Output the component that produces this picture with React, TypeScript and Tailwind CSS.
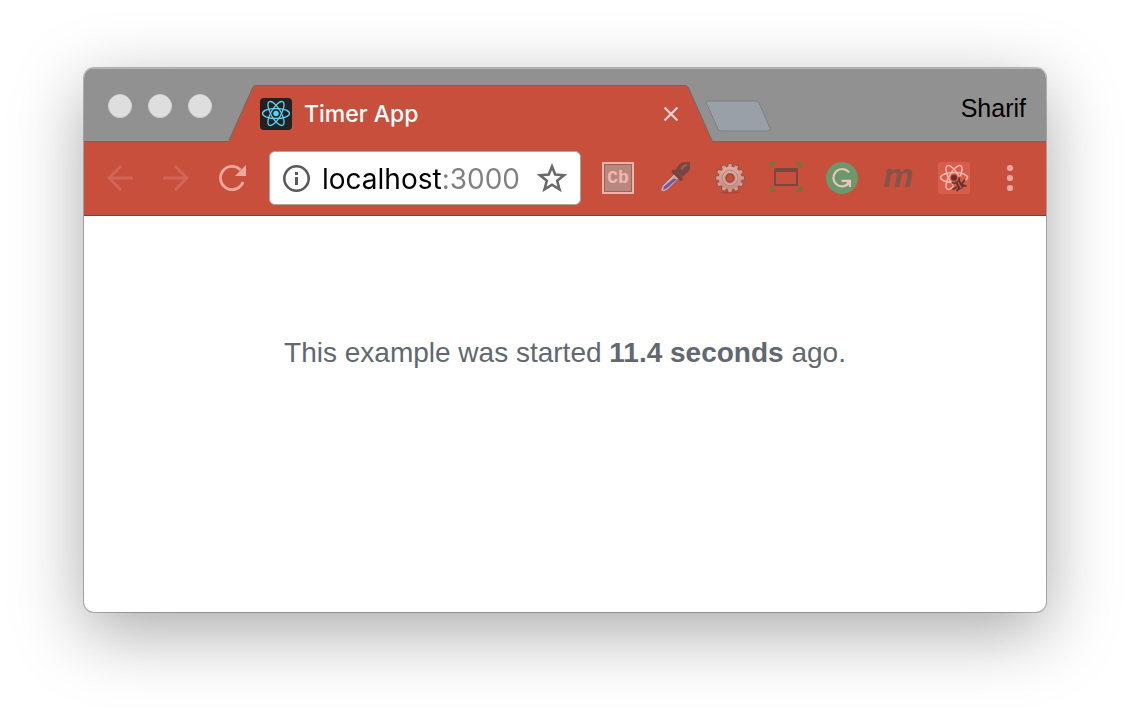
import React, { useState } from 'react';

function ReactAtom({ stroke, width }: { stroke: string; width: number }) {
  return (
    <g fill="none" stroke={stroke} strokeWidth={width}>
      <ellipse cx="16" cy="15.5" rx="13.5" ry="5" />
      <ellipse cx="16" cy="15.5" rx="13.5" ry="5" transform="rotate(60 16 15.5)" />
      <ellipse cx="16" cy="15.5" rx="13.5" ry="5" transform="rotate(120 16 15.5)" />
    </g>
  );
}

function Favicon() {
  return (
    <svg viewBox="0 0 32 32" className="size-8 shrink-0" aria-hidden="true">
      <rect width="32" height="32" rx="4" fill="#222" />
      <ReactAtom stroke="#5ed3f3" width={1.3} />
      <circle cx="16" cy="15.5" r="2.7" fill="#5ed3f3" />
    </svg>
  );
}

function Eyedropper() {
  return (
    <svg viewBox="0 0 32 32" className="size-8" aria-hidden="true">
      <path d="M18 10 L4.500 23.500 L2.500 28 L5 30 L9.500 28 L23 14.500 Z" fill="#d8a5a1" stroke="#9a5a5c" strokeWidth="1" />
      <path d="M15.500 16.500 L19 17 L8.500 26.500 L5 28 L6 24.500 Z" fill="#6a5aa9" />
      <path d="M15.500 9.500 L23 17" stroke="#75443f" strokeWidth="3.6" strokeLinecap="round" />
      <path d="M17 8.500 L20 4 Q23 0 28 0 H31 L32 1 V5 Q33 8 28 12 L24 15 Z" fill="#78463f" />
      <path d="M23.500 7.500 Q25 3.500 29 3" stroke="#9a6159" strokeWidth="2.200" fill="none" />
    </svg>
  );
}

const TEETH = [0, 30, 60, 90, 120, 150, 180, 210, 240, 270, 300, 330];

function Gear() {
  return (
    <svg viewBox="0 0 32 32" className="size-8" aria-hidden="true">
      <defs>
        <linearGradient id="gear-fill" x1="0" y1="0" x2="0" y2="1">
          <stop offset="0" stopColor="#dfaaa0" />
          <stop offset="1" stopColor="#c48c82" />
        </linearGradient>
      </defs>
      <ellipse cx="16" cy="30.500" rx="10" ry="1.200" fill="#b24434" />
      {TEETH.map((a) => (
        <path key={a} d="M13.300 6 L14.200 1.600 H17.800 L18.700 6 Z" fill="#d39e94" stroke="#8b4a40" strokeWidth="0.800" transform={`rotate(${a} 16 16)`} />
      ))}
      <circle cx="16" cy="16" r="11.300" fill="url(#gear-fill)" />
      <circle cx="16" cy="16" r="7.800" fill="none" stroke="#b98177" strokeWidth="0.900" />
      <circle cx="16" cy="16" r="6.600" fill="none" stroke="#dcaaa1" strokeWidth="1" />
      <circle cx="16" cy="16" r="4.100" fill="#c94f3d" stroke="#83443b" strokeWidth="1.200" />
    </svg>
  );
}

function ResizeFrame() {
  return (
    <svg viewBox="0 0 32 32" className="size-8" aria-hidden="true">
      <path d="M0 0 H7 L0 7 Z M32 0 V7 L25 0 Z M0 30 V23 L7 30 Z M32 30 H25 L32 23 Z" fill="#747539" />
      <path d="M5 6 H27 L28 7 V24 H4 V7 Z M6 10 V22 H26 V10 Z" fill="#7a4740" fillRule="evenodd" />
    </svg>
  );
}

function Grammar() {
  return (
    <svg viewBox="0 0 32 32" className="size-8" aria-hidden="true">
      <circle cx="16" cy="16" r="16" fill="#6b986c" />
      <path d="M22.500 9.800 A8.700 8.700 0 1 0 23 21" fill="none" stroke="#edc6ba" strokeWidth="2.200" strokeLinecap="round" />
      <path d="M15.500 18.800 H23.900 V25 M23.600 19 L20.500 23" fill="none" stroke="#edc6ba" strokeWidth="2.200" />
    </svg>
  );
}

function ReactDebug() {
  return (
    <svg viewBox="0 0 32 32" className="size-8" aria-hidden="true">
      <rect width="32" height="32" rx="2.500" fill="#d95b49" />
      <ReactAtom stroke="#f1b9af" width={1.5} />
      <path d="M14 19 L22 14 L28 20 L25 27 L17 28 Z" fill="#d95b49" />
      <circle cx="16" cy="15.800" r="3" fill="#63332c" />
      <path d="M17 20 L21 18 L26 23 L24 27 L21 28 Z" fill="#63332c" />
      <path d="M20 20 L23.500 26.500" stroke="#d95b49" strokeWidth="1.200" />
      <path d="M13.500 20.500 L17.500 21.500 M14.500 27.500 L19 25 M18.500 29 L21 26.500 M21 19 L21.500 15.500 M24 21.500 L27 17.500 M25 23.500 L28.500 24" stroke="#63332c" strokeWidth="1.800" />
    </svg>
  );
}

function TabStrip() {
  return (
    <header className="flex h-[74px] items-end border-b border-[#7b6360] bg-[#919191] shadow-[inset_0_1px_0_#b8b8b8]">
      <div className="mb-[23px] flex gap-4 pr-4 pl-6">
        <button aria-label="Close window" className="size-6 rounded-full border border-[#d2d2d2] bg-[#dedede]" />
        <button aria-label="Minimize window" className="size-6 rounded-full border border-[#d2d2d2] bg-[#dedede]" />
        <button aria-label="Zoom window" className="size-6 rounded-full border border-[#d2d2d2] bg-[#dedede]" />
      </div>
      <div className="-mb-px flex h-[57px] max-w-[485px] min-w-0 flex-1">
        <svg viewBox="0 0 28 57" className="h-[57px] w-7 shrink-0" aria-hidden="true">
          <path d="M0 57 L1 56 L24.500 3 Q25.500 0.500 28 0.500 V57 Z" fill="#c94f3d" />
          <path d="M0 56.500 L1 55.500 L24.500 3 Q25.500 0.500 28 0.500" fill="none" stroke="#6d6866" />
        </svg>
        <div className="flex min-w-0 flex-1 items-center border-t border-[#6d6866] bg-[#c94f3d] pl-1">
          <Favicon />
          <span className="ml-3 flex-1 truncate font-[Inter,sans-serif] text-[23px] leading-8 font-medium text-white">Timer App</span>
          <button aria-label="Close tab" className="flex h-8 w-7 items-center justify-center">
            <svg viewBox="0 0 14 14" className="size-3.5" aria-hidden="true">
              <path d="M0.500 0.500 L13.500 13.500 M13.500 0.500 L0.500 13.500" stroke="#dfd3d1" strokeWidth="2.200" />
            </svg>
          </button>
        </div>
        <svg viewBox="0 0 28 57" className="h-[57px] w-7 shrink-0" aria-hidden="true">
          <path d="M28 57 L27 56 L3.500 3 Q2.500 0.500 0 0.500 V57 Z" fill="#c94f3d" />
          <path d="M28 56.500 L27 55.500 L3.500 3 Q2.500 0.500 0 0.500" fill="none" stroke="#6d6866" />
        </svg>
      </div>
      <button aria-label="New tab" className="mb-[9px] -ml-2 shrink-0">
        <svg viewBox="0 0 66 32" className="block h-8 w-[66px]" aria-hidden="true">
          <path d="M4 1 H51 Q53 1 54 3 L65 28 Q66 31 63 31 H16 Q14 31 13 29 L1.500 3.500 Q0.500 1 4 1 Z" fill="#99a0a7" stroke="#7d8083" />
        </svg>
      </button>
      <button className="mr-5 mb-[17px] ml-auto font-['Liberation_Sans',sans-serif] text-[25px] leading-8 text-black">Sharif</button>
    </header>
  );
}

function Toolbar() {
  const [address, setAddress] = useState('localhost:3000');
  return (
    <nav className="flex h-[74px] items-center gap-[21px] border-b border-[#93392c] bg-[#c94f3d] px-5 pb-0.5">
      <div className="flex gap-6">
        <button aria-label="Back" className="size-8">
          <svg viewBox="0 0 32 32" className="size-8" fill="none" stroke="#d06656" strokeWidth="2.800" aria-hidden="true">
            <path d="M29 16 H5 M17 4 L5 16 L17 28" />
          </svg>
        </button>
        <button aria-label="Forward" className="size-8">
          <svg viewBox="0 0 32 32" className="size-8" fill="none" stroke="#d06656" strokeWidth="2.800" aria-hidden="true">
            <path d="M3 16 H27 M15 4 L27 16 L15 28" />
          </svg>
        </button>
        <button aria-label="Reload" className="size-8">
          <svg viewBox="0 0 32 32" className="size-8" aria-hidden="true">
            <path d="M24.500 8 A11.600 11.600 0 1 0 27 20" fill="none" stroke="#eba99f" strokeWidth="2.800" />
            <path d="M30 3 V14 H19 Z" fill="#eba99f" />
          </svg>
        </button>
      </div>
      <div className="flex h-[54px] min-w-0 flex-1 items-center rounded-md border border-[#b5a19e] bg-white px-3">
        <button aria-label="Site information" className="size-[30px] shrink-0">
          <svg viewBox="0 0 30 30" className="size-[30px]" aria-hidden="true">
            <circle cx="14.500" cy="15.500" r="12.200" fill="none" stroke="#5a5a5a" strokeWidth="2.600" />
            <path d="M14.500 14 V22 M14.500 9 V12" stroke="#5a5a5a" strokeWidth="3" />
          </svg>
        </button>
        <input
          aria-label="Address"
          value={address}
          onChange={(e) => setAddress(e.target.value)}
          className="mt-0.5 ml-2.5 h-10 min-w-0 flex-1 bg-[linear-gradient(90deg,#000_119px,#808080_119px)] bg-clip-text font-[Inter,sans-serif] text-[28px] text-transparent caret-black outline-none"
        />
        <button aria-label="Bookmark this page" className="size-8 shrink-0">
          <svg viewBox="0 0 32 32" className="size-8" aria-hidden="true">
            <path d="M16 4.500 L19.200 12.600 L28 13.200 L21.200 18.800 L23.500 27.400 L16 22.700 L8.500 27.400 L10.800 18.800 L4 13.200 L12.800 12.600 Z" fill="none" stroke="#6a6a6a" strokeWidth="2.600" />
          </svg>
        </button>
      </div>
      <div className="flex gap-6">
        <button aria-label="Codebase" className="flex size-8 items-center justify-center border-2 border-[#ecb3aa] bg-[#b8877e] font-['Liberation_Mono',monospace] text-[18px] leading-7 font-bold text-[#f0b8ae] shadow-[inset_0_0_0_1px_#9f6259]">Cb</button>
        <button aria-label="Color picker" className="size-8"><Eyedropper /></button>
        <button aria-label="Settings" className="size-8"><Gear /></button>
        <button aria-label="Resize window" className="size-8"><ResizeFrame /></button>
        <button aria-label="Grammar" className="size-8"><Grammar /></button>
        <button className="flex size-8 items-center justify-center pb-1.5 font-['Liberation_Sans',sans-serif] text-[34px] leading-8 font-bold text-[#85534a] italic">m</button>
        <button aria-label="React tools" className="size-8"><ReactDebug /></button>
        <button aria-label="Menu" className="size-8">
          <svg viewBox="0 0 32 32" className="size-8" fill="#e9a69c" aria-hidden="true">
            <circle cx="16" cy="6" r="3.100" />
            <circle cx="16" cy="16" r="3.100" />
            <circle cx="16" cy="26" r="3.100" />
          </svg>
        </button>
      </div>
    </nav>
  );
}

export default function App() {
  return (
    <div className="min-h-screen bg-white px-[84px] pt-[68px] pb-[100px]">
      <div className="overflow-hidden rounded-[10px] bg-white shadow-[0_0_0_1px_rgba(0,0,0,0.25),0_20px_70px_rgba(0,0,0,0.34)]">
        <TabStrip />
        <Toolbar />
        <main className="px-8 pt-[117px] pb-[239px]">
          <p className="text-center font-['Liberation_Sans',sans-serif] text-[28px] leading-10 text-[#61686f]">
            This example was started <strong>11.4 seconds</strong> ago.
          </p>
        </main>
      </div>
    </div>
  );
}
